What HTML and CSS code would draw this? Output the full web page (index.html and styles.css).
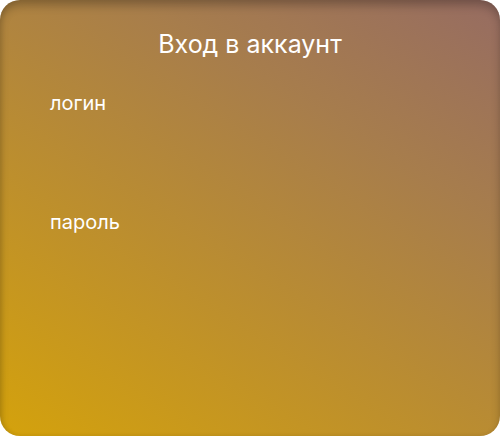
FILE: index.html
```html
<!DOCTYPE html>
<html lang="ru">
<head>
<meta charset="utf-8">
<link rel="stylesheet" href="styles.css">
</head>
<body>
<form class="card">
  <h1 class="title">Вход в аккаунт</h1>
  <div class="field">
    <label class="label">логин</label>
  </div>
  <div class="field">
    <label class="label">пароль</label>
  </div>
</form>
</body>
</html>
```
FILE: styles.css
```css
html, body {
  margin: 0;
  padding: 0;
  background: #ffffff;
}
.card {
  box-sizing: border-box;
  width: 500px;
  height: 436px;
  border-radius: 20px;
  background: linear-gradient(212deg, #966c62 0%, #a77d4c 30%, #d4a20c 100%);
  box-shadow: inset 0 6px 8px rgba(0, 0, 0, 0.22), inset 2px 0 4px rgba(0, 0, 0, 0.08);
  padding: 28px 50px 0;
  font-family: Inter, "Noto Sans", sans-serif;
  color: #ffffff;
  display: flex;
  flex-direction: column;
}
.title {
  margin: 0;
  text-align: center;
  font-size: 25px;
  font-weight: 400;
  line-height: 32px;
}
.field {
  display: flex;
  flex-direction: column;
  height: 119px;
}
.field:first-of-type {
  margin-top: 31px;
}
.label {
  font-size: 20px;
  line-height: 24px;
}
```
